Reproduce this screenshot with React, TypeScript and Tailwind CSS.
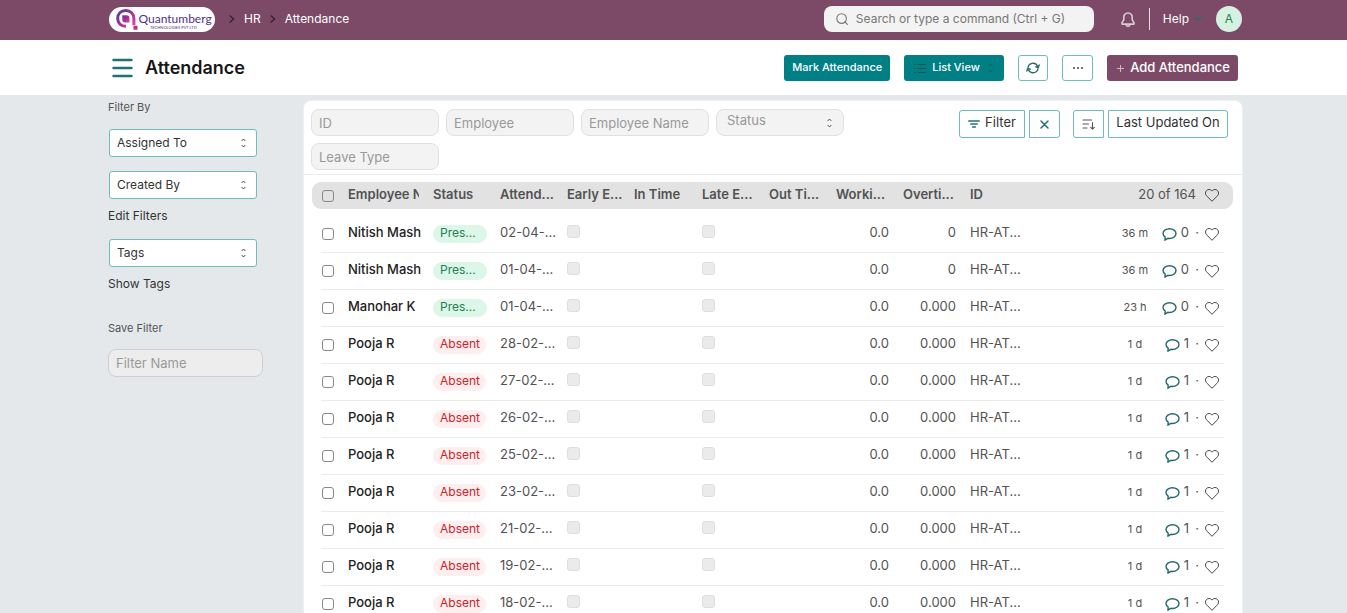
import type { ReactNode } from "react";

type Row = {
  name: string;
  status: "Pres..." | "Absent";
  date: string;
  overtime: string;
  age: string;
  comments: number;
};

const absent = (date: string): Row => ({
  name: "Pooja R",
  status: "Absent",
  date,
  overtime: "0.000",
  age: "1 d",
  comments: 1,
});

const rows: Row[] = [
  { name: "Nitish Mash", status: "Pres...", date: "02-04-...", overtime: "0", age: "36 m", comments: 0 },
  { name: "Nitish Mash", status: "Pres...", date: "01-04-...", overtime: "0", age: "36 m", comments: 0 },
  { name: "Manohar K", status: "Pres...", date: "01-04-...", overtime: "0.000", age: "23 h", comments: 0 },
  absent("28-02-..."),
  absent("27-02-..."),
  absent("26-02-..."),
  absent("25-02-..."),
  absent("23-02-..."),
  absent("21-02-..."),
  absent("19-02-..."),
  absent("18-02-..."),
];

function Sorter({ className = "" }: { className?: string }) {
  return (
    <svg className={className} width="7" height="10" viewBox="0 0 7 10" fill="none" stroke="currentColor" strokeWidth="1" strokeLinecap="round" strokeLinejoin="round" aria-hidden="true">
      <path d="M2 2.600 3.500 1.100 5 2.600M2 7.400l1.500 1.500L5 7.400" />
    </svg>
  );
}

function Chevron() {
  return (
    <svg className="text-[#2b2030]" width="6" height="8" viewBox="0 0 6 8" fill="none" stroke="currentColor" strokeWidth="1.2" strokeLinecap="round" strokeLinejoin="round" aria-hidden="true">
      <path d="M1 .8 4.6 4 1 7.2" />
    </svg>
  );
}

function Heart() {
  return (
    <svg className="shrink-0 text-[#444]" width="14" height="13" viewBox="0 0 14 13" fill="none" stroke="currentColor" strokeWidth="1" strokeLinejoin="round" aria-hidden="true">
      <path d="M7 2.1C7.7 1 8.8.5 10 .5c2 0 3.5 1.6 3.5 3.6 0 1.3-.6 2.2-1.5 3.1L7 12.3 2 7.2C1.1 6.300.5 5.400.5 4.100.5 2.100 2 .5 4 .5 5.200.5 6.300 1 7 2.100Z" />
    </svg>
  );
}

function Comment() {
  return (
    <svg className="shrink-0 text-[#26696b]" width="15" height="13" viewBox="0 0 15 13" fill="none" stroke="currentColor" strokeWidth="1.4" strokeLinecap="round" strokeLinejoin="round" aria-hidden="true">
      <path d="M7.500 .8C3.900.8 1 2.900 1 5.600c0 1.500.9 2.700 2.200 3.600L2.900 12.200l2.900-1.900c.5.100 1.100.2 1.700.2 3.600 0 6.500-2.200 6.500-4.900S11.100.8 7.500.8Z" />
    </svg>
  );
}

function Logo() {
  return (
    <svg width="106" height="25" viewBox="0 0 106 25" role="img" aria-label="Quantumberg Technologies Pvt Ltd">
      <defs>
        <linearGradient id="mark" x1="0" y1="0" x2="1" y2="1">
          <stop offset="0" stopColor="#4b3fa0" />
          <stop offset=".5" stopColor="#a03098" />
          <stop offset="1" stopColor="#ef3f8f" />
        </linearGradient>
      </defs>
      <rect width="106" height="25" rx="12.500" fill="#fff" />
      <path d="M17 19.300c-5 .2-8.300-3-8.300-7.800 0-4.700 3.200-8 8-8s8.200 3.300 8.200 8v6.800" fill="none" stroke="url(#mark)" strokeWidth="3" />
      <path d="M13.300 8.200h4.200a3 3 0 0 1 3 3v4.300h-4.200a3 3 0 0 1-3-3Z" fill="url(#mark)" />
      <rect x="24.500" y="18.800" width="4" height="4" rx=".6" fill="#b42f9b" />
      <text x="29.500" y="15.500" fontFamily="Lato, sans-serif" fontSize="12" fill="#513089">Quantumberg</text>
      <text x="41" y="21.500" fontFamily="Lato, sans-serif" fontSize="4" fill="#513089">TECHNOLOGIES PVT LTD</text>
    </svg>
  );
}

function SideSelect({ label }: { label: string }) {
  return (
    <div className="relative w-[148px]">
      <select aria-label={label} className="block h-7 w-full appearance-none rounded-[3px] border border-[#6fbcbc] bg-white px-[7px] text-xs text-[#333]">
        <option>{label}</option>
      </select>
      <Sorter className="pointer-events-none absolute top-[9px] right-[10px] text-[#333]" />
    </div>
  );
}

function Field({ label }: { label: string }) {
  return (
    <input
      type="text"
      aria-label={label}
      placeholder={label}
      className="h-[27px] w-32 rounded-lg border border-[#e0e0e0] bg-[#f3f3f3] px-[7px] text-[13px] placeholder:text-[#999]"
    />
  );
}

function Outline({ label, className, children }: { label: string; className: string; children: ReactNode }) {
  return (
    <button type="button" aria-label={label} className={`flex items-center justify-center border border-[#6fbcbc] bg-white text-[13px] text-[#333] ${className}`}>
      {children}
    </button>
  );
}

const tick = "block size-3 appearance-none rounded-[3px] border border-[#888] bg-white";
const offTick = "block size-[13px] appearance-none rounded-[3px] border border-[#dedede] bg-[#ebebeb]";

function Head({ children, pad = "pr-3 pb-0.5" }: { children?: ReactNode; pad?: string }) {
  return (
    <th scope="col" className={`h-[27px] bg-[#e2e2e2] pt-0 pl-0 text-left font-semibold whitespace-nowrap ${pad}`}>
      {children}
    </th>
  );
}

function Cell({ children, className = "", pad = "pr-[14px] pb-0.5" }: { children?: ReactNode; className?: string; pad?: string }) {
  return <td className={`h-[37px] border-b border-[#ebebeb] pt-0 pl-0 whitespace-nowrap ${pad} ${className}`}>{children}</td>;
}

function RecordRow({ row }: { row: Row }) {
  const present = row.status === "Pres...";
  return (
    <tr>
      <td />
      <Cell pad="pb-0"><input type="checkbox" aria-label={`Select ${row.name} ${row.date}`} className={`${tick} ml-px`} /></Cell>
      <Cell pad="pr-3 pb-0.5" className="font-medium text-[#222]">{row.name}</Cell>
      <Cell pad="pr-0 pb-0">
        <span className={present ? "flex h-[18px] w-[54px] items-center rounded-full bg-[#dcf6e8] px-[7px] pb-0.5 text-xs text-[#1f8052]" : "flex h-[18px] w-[53px] items-center rounded-full bg-[#ffeeee] px-[7px] pb-0.5 text-xs text-[#c9242b]"}>
          {row.status}
        </span>
      </Cell>
      <Cell pad="pr-0 pb-0.5">{row.date}</Cell>
      <Cell pad="pb-[5px]"><input type="checkbox" disabled aria-label="Early Exit" className={offTick} /></Cell>
      <Cell />
      <Cell pad="pb-[5px]"><input type="checkbox" disabled aria-label="Late Entry" className={offTick} /></Cell>
      <Cell />
      <Cell className="text-right">0.0</Cell>
      <Cell className="text-right">{row.overtime}</Cell>
      <Cell>HR-AT...</Cell>
      <Cell pad="pr-[5px] pb-0">
        <div className="flex items-center justify-end">
          <span className="w-8 pb-0.5 text-center text-[11px]">{row.age}</span>
          <button type="button" aria-label={`${row.comments} comments`} className="flex w-[38px] items-center justify-end gap-1">
            <Comment />
            <span className="pb-0.5">{row.comments}</span>
          </button>
          <span className="w-4 pb-0.5 text-center">·</span>
          <button type="button" aria-label="Like"><Heart /></button>
        </div>
      </Cell>
      <td />
    </tr>
  );
}

export default function App() {
  return (
    <div className="flex h-screen flex-col overflow-hidden bg-[#e4e8eb] font-['Inter',sans-serif] text-[13px] text-[#525252]">
      <nav className="flex h-10 shrink-0 items-center bg-[#7c4a66] pr-[105px] pb-[2px] pl-[109px] text-xs text-white">
        <a href="#home"><Logo /></a>
        <div className="ml-[14px] flex items-center gap-[9px]">
          <Chevron />
          <a href="#hr">HR</a>
          <Chevron />
          <a href="#attendance">Attendance</a>
        </div>
        <label className="ml-auto flex h-[26px] w-[270px] items-center gap-2 rounded-lg bg-[#f3f3f3] px-3 text-[#777]">
          <svg width="12" height="12" viewBox="0 0 12 12" fill="none" stroke="currentColor" strokeWidth="1.100" strokeLinecap="round" aria-hidden="true">
            <circle cx="5.600" cy="5.600" r="4.800" />
            <path d="m9 9 2.400 2.400" />
          </svg>
          <input type="text" aria-label="Search" placeholder="Search or type a command (Ctrl + G)" className="min-w-0 flex-1 bg-transparent text-xs placeholder:text-[#777]" />
        </label>
        <button type="button" aria-label="Notifications" className="ml-[27px] text-[#d9cdd4]">
          <svg width="14" height="15" viewBox="0 0 14 15" fill="none" stroke="currentColor" strokeWidth="1.600" strokeLinejoin="round" aria-hidden="true">
            <path d="M7 1C4.400 1 2.800 3 2.800 5.300v2.500L1 10.600v1.500h12v-1.500l-1.800-2.800V5.300C11.200 3 9.600 1 7 1ZM5 12.300c.2 1.200 1 1.900 2 1.900s1.800-.7 2-1.900" />
          </svg>
        </button>
        <span className="ml-[14px] h-[22px] w-px bg-[#e6dce2]" />
        <button type="button" className="ml-[13px] flex items-center gap-[5px]">
          Help
          <svg className="text-[#2b6a6c]" width="8" height="6" viewBox="0 0 8 6" fill="none" stroke="currentColor" strokeWidth="1.400" strokeLinecap="round" aria-hidden="true"><path d="m1 1.200 3 3 3-3" /></svg>
        </button>
        <button type="button" aria-label="Account" className="ml-[14px] flex size-[26px] items-center justify-center rounded-full bg-[#d5f1e2] text-xs text-[#1f8052]">A</button>
      </nav>

      <header className="flex h-[55px] shrink-0 items-center bg-white pr-[109px] pl-[112px]">
        <button type="button" aria-label="Toggle sidebar" className="text-[#1f7274]">
          <svg width="21" height="20" viewBox="0 0 21 20" stroke="currentColor" strokeWidth="2.400" strokeLinecap="round" aria-hidden="true">
            <path d="M1.500 2h18M1.500 10h18M1.500 18h18" />
          </svg>
        </button>
        <h1 className="ml-3 text-lg font-semibold text-[#171717]">Attendance</h1>
        <div className="ml-auto flex h-[26px] items-stretch gap-[14px]">
          <button type="button" className="rounded-[3px] bg-[#008085] px-2 text-[11px] font-medium text-white">Mark Attendance</button>
          <button type="button" className="flex w-[100px] items-center rounded-[3px] bg-[#008085] pr-[10px] pl-[10px] text-[11px] font-medium text-white">
            <svg className="text-[#2c4f52]" width="12" height="10" viewBox="0 0 12 10" stroke="currentColor" strokeWidth="1" aria-hidden="true">
              <path d="M3.500 1.500H12M3.500 5.500H12M3.500 9.500H12M0 1.500h1.500M0 5.500h1.500M0 9.500h1.500" />
            </svg>
            <span className="ml-[6px]">List View</span>
            <Sorter className="ml-auto text-[#2c4f52]" />
          </button>
          <Outline label="Refresh" className="w-[30px] rounded-[3px]">
            <svg className="text-[#26696b]" width="14" height="12" viewBox="0 0 14 12" fill="none" stroke="currentColor" strokeWidth="1.400" strokeLinecap="round" strokeLinejoin="round" aria-hidden="true">
              <path d="M2 5.500A5 5 0 0 1 11.400 4M12 6.500A5 5 0 0 1 2.600 8M13.200 3l-.9 2.600-2.500-.8M.8 9l.9-2.600 2.500.8" />
            </svg>
          </Outline>
          <Outline label="More actions" className="w-[31px] rounded-[3px]">
            <svg width="10" height="2" viewBox="0 0 10 2" fill="currentColor" aria-hidden="true"><circle cx="1" cy="1" r=".9" /><circle cx="5" cy="1" r=".9" /><circle cx="9" cy="1" r=".9" /></svg>
          </Outline>
          <button type="button" className="flex items-center gap-[6px] rounded-[3px] bg-[#7c4a66] pr-2 pl-[9px] text-[13px] font-medium text-white">
            <svg width="8" height="8" viewBox="0 0 8 8" stroke="#cbb8c3" aria-hidden="true"><path d="M4.500 1v7M1 4.500h7" /></svg>
            Add Attendance
          </button>
        </div>
      </header>

      <div className="flex min-h-0 flex-1 items-start pr-[104px] pl-[108px]">
        <aside className="flex w-[195px] shrink-0 flex-col items-start pt-1 text-xs text-[#333]">
          <span className="text-[11px] leading-4 text-[#525252]">Filter By</span>
          <div className="mt-[14px] ml-px"><SideSelect label="Assigned To" /></div>
          <div className="mt-[14px] ml-px"><SideSelect label="Created By" /></div>
          <a href="#edit" className="mt-[9px] leading-4">Edit Filters</a>
          <div className="mt-[15px] ml-px"><SideSelect label="Tags" /></div>
          <a href="#tags" className="mt-[9px] leading-4">Show Tags</a>
          <label htmlFor="filter-name" className="mt-7 text-[11px] leading-4 text-[#525252]">Save Filter</label>
          <input id="filter-name" type="text" placeholder="Filter Name" className="mt-[13px] h-7 w-[155px] rounded-lg border border-[#cfcfcf] bg-[#ededed] px-[7px] text-[13px] placeholder:text-[#999]" />
        </aside>

        <main className="mt-[5px] min-w-0 flex-1 rounded-t-lg border border-[#edeff0] bg-white">
          <div className="flex items-start border-b border-[#ebebeb] px-[7px] pt-2 pb-1">
            <div className="flex flex-1 flex-wrap gap-[7px]">
              <Field label="ID" />
              <Field label="Employee" />
              <Field label="Employee Name" />
              <div className="relative w-32">
                <select aria-label="Status" className="block h-[27px] w-full appearance-none rounded-lg border border-[#e0e0e0] bg-[#f3f3f3] px-[10px] pb-[3px] text-[13px] text-[#999]">
                  <option>Status</option>
                </select>
                <Sorter className="pointer-events-none absolute top-[9px] right-[11px] text-[#444]" />
              </div>
              <Field label="Leave Type" />
            </div>
            <div className="mr-[7px] flex h-7 shrink-0 items-stretch gap-1 pt-px">
              <Outline label="Filter" className="h-7 w-[66px] gap-[5px] rounded-l-[3px]">
                <svg className="text-[#1f7274]" width="12" height="8" viewBox="0 0 12 8" stroke="currentColor" strokeWidth="1.500" strokeLinecap="round" aria-hidden="true"><path d="M.8 1h10.400M2.800 4h6.400M4.600 7h2.800" /></svg>
                <span className="pb-0.5">Filter</span>
              </Outline>
              <Outline label="Clear filters" className="h-7 w-[31px] rounded-r-[3px]">
                <svg className="text-[#1f7274]" width="9" height="9" viewBox="0 0 9 9" stroke="currentColor" strokeWidth="1.500" strokeLinecap="round" aria-hidden="true"><path d="m1 1 7 7M8 1 1 8" /></svg>
              </Outline>
              <Outline label="Sort direction" className="ml-[9px] h-7 w-[31px] rounded-l-[3px]">
                <svg className="text-[#555]" width="13" height="11" viewBox="0 0 13 11" fill="none" stroke="currentColor" strokeWidth="1.100" strokeLinecap="round" strokeLinejoin="round" aria-hidden="true"><path d="M1 1h8.500M1 5h5.500M1 9h4M10.500 3.500V10M8.700 8.300l1.800 1.800 1.800-1.800" /></svg>
              </Outline>
              <Outline label="Last Updated On" className="h-7 w-[120px] rounded-r-[3px]"><span className="pb-0.5">Last Updated On</span></Outline>
            </div>
          </div>

          <div className="pt-[7px] pr-[9px] pl-2">
            <table className="w-full table-fixed border-separate border-spacing-0">
              <colgroup>
                <col className="w-[9px]" />
                <col className="w-[27px]" />
                <col className="w-[85px]" />
                <col className="w-[67px]" />
                <col className="w-[67px]" />
                <col className="w-[67px]" />
                <col className="w-[68px]" />
                <col className="w-[67px]" />
                <col className="w-[67px]" />
                <col className="w-[67px]" />
                <col className="w-[67px]" />
                <col className="w-[67px]" />
                <col />
                <col className="w-[9px]" />
              </colgroup>
              <thead>
                <tr>
                  <td className="rounded-l-[10px] bg-[#e2e2e2]" />
                  <Head pad="pb-0"><input type="checkbox" aria-label="Select all" className="ml-px block size-3 appearance-none rounded-[3px] border border-[#888]" /></Head>
                  <Head pad="pr-[14px] pb-0.5"><div className="overflow-hidden">Employee N</div></Head>
                  <Head>Status</Head>
                  <Head>Attend...</Head>
                  <Head>Early E...</Head>
                  <Head>In Time</Head>
                  <Head>Late E...</Head>
                  <Head>Out Ti...</Head>
                  <Head>Worki...</Head>
                  <Head>Overti...</Head>
                  <Head>ID</Head>
                  <Head pad="pr-[5px] pb-0">
                    <div className="flex items-center justify-end gap-[9px] font-normal">
                      <span className="pb-0.5">20 of 164</span>
                      <Heart />
                    </div>
                  </Head>
                  <td className="rounded-r-[10px] bg-[#e2e2e2]" />
                </tr>
              </thead>
              <tbody>
                <tr aria-hidden="true"><td className="h-[7px] p-0" colSpan={14} /></tr>
                {rows.map((row, i) => (
                  <RecordRow key={i} row={row} />
                ))}
              </tbody>
            </table>
          </div>
        </main>
      </div>
    </div>
  );
}
